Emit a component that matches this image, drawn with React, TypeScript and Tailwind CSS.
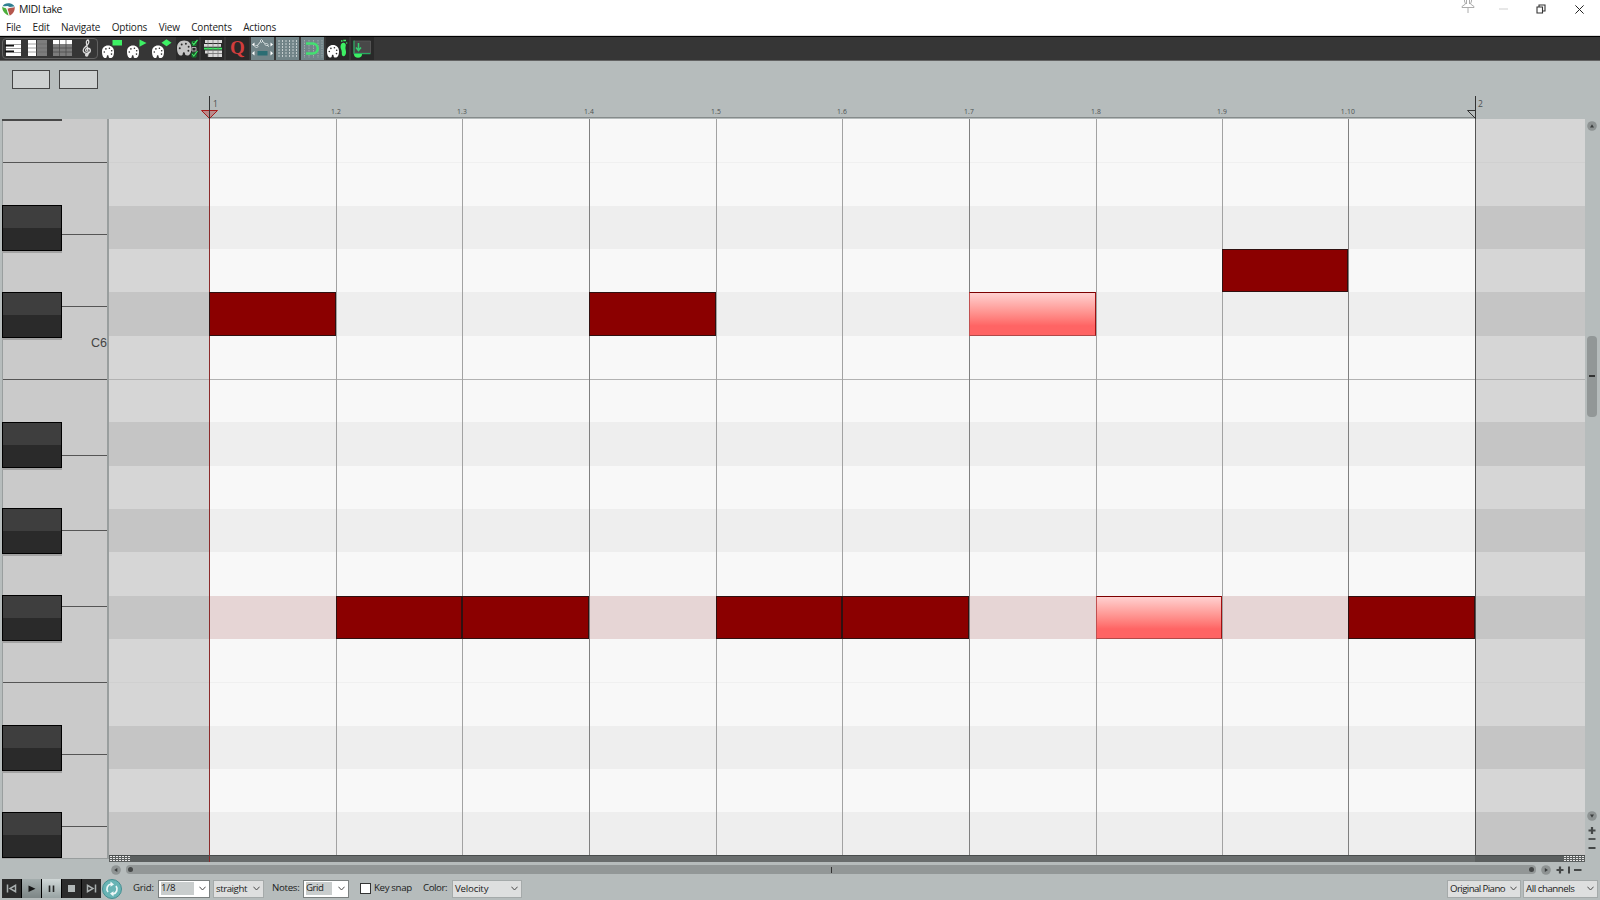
import type { ReactNode } from 'react';

const menus = ['File', 'Edit', 'Navigate', 'Options', 'View', 'Contents', 'Actions'];

// one entry per semitone lane, top to bottom
const lanes = [
  { black: false }, { black: false, faint: true }, { black: true }, { black: false }, { black: true },
  { black: false }, { black: false, octave: true }, { black: true }, { black: false },
  { black: true }, { black: false }, { black: true, tinted: true }, { black: false },
  { black: false, faint: true }, { black: true }, { black: false }, { black: true },
];

const LANE = 43.333;

// left edge of every beat, the last one closes the item
const beats = [100, 227, 353, 480, 607, 733, 860, 987, 1113, 1239, 1366];

const notes = [
  { step: 0, lane: 4 },
  { step: 1, lane: 11 },
  { step: 2, lane: 11 },
  { step: 3, lane: 4 },
  { step: 4, lane: 11 },
  { step: 5, lane: 11 },
  { step: 6, lane: 4, selected: true },
  { step: 7, lane: 11, selected: true },
  { step: 8, lane: 3 },
  { step: 9, lane: 11 },
];

const whiteKeys = [44, 72, 72, 73, 75.5, 75.5, 76, 76, 72, 72, 31.5];
const blackKeys = [86, 173, 303, 389, 476, 606, 693];

function Palette({ x = 0, y = 0, color = '#fff', s = 1 }: { x?: number; y?: number; color?: string; s?: number }) {
  return (
    <g transform={`translate(${x} ${y}) scale(${s})`}>
      <path d="M6 0C2.400 0 0 2.300 0 6.200 0 9.800 1.200 12.500 3.200 12.500c1.300 0 1.600-.7 1.600-1.500 0-.8.300-1.300.9-1.300s.9.500.9 1.200c0 1 .6 1.600 2 1.600C11 12.500 12 9.600 12 6.200 12 2.300 9.500 0 6 0z" fill={color} />
      <g fill="#2b2b2b">
        <circle cx="2.300" cy="6.500" r=".8" />
        <circle cx="3.900" cy="3.400" r=".8" />
        <circle cx="7.400" cy="2.700" r=".8" />
        <circle cx="9.700" cy="5.200" r=".8" />
        <circle cx="9.500" cy="8.600" r=".8" />
      </g>
    </g>
  );
}

const GREEN = '#3df064';

const tools: { bg?: string; icon: ReactNode }[] = [
  {
    icon: (
      <g>
        <path d="M5 3h15v16H5z" fill="#fff" />
        <path d="M4 8.500h9M4 14.500h9" stroke="#111" strokeWidth="2.200" />
        <path d="M12 7.500h8M5 11.500h15M12 15.500h8" stroke="#777" strokeWidth=".7" />
      </g>
    ),
  },
  {
    icon: (
      <g>
        <path d="M2 3h8v16H2z" fill="#fff" />
        <path d="M11 3h10v16H11z" fill="#7d7d7d" />
        <path d="M2 7h19M2 11h19M2 15h19" stroke="#666" strokeWidth=".6" />
      </g>
    ),
  },
  {
    icon: (
      <g>
        <path d="M2 7h19v12H2z" fill="#7d7d7d" />
        <path d="M2 3h19v4H2z" fill="#fff" />
        <path d="M2 11h19M2 15h19M8.500 3v16M15 3v16" stroke="#4c4c4c" strokeWidth=".8" />
      </g>
    ),
  },
  {
    icon: (
      <g fill="none" stroke="#ddd" strokeWidth="1.300">
        <path d="M12.500 17.500 10.400 6c-.3-2 .7-3 1.700-3 1.300 1.600.7 3.400-.8 5.100C9 10.200 7.200 11.400 7.200 13.300c0 2 1.800 3 3.800 3s3.300-1 3.300-2.700c0-3.300-4.700-2.900-4.700-.4 0 .8.500 1.300 1.200 1.500" />
        <circle cx="10.700" cy="18" r="1.100" fill="#ddd" />
      </g>
    ),
  },
  { icon: <g><Palette x={1} y={8.500} /><path d="M11.500 3h9.500v5.500h-9.500z" fill={GREEN} /></g> },
  { icon: <g><Palette x={1} y={8.500} /><path d="m13.500 2.500 7 3.500-7 3.700z" fill={GREEN} /></g> },
  { icon: <g><Palette x={1} y={8.500} /><path d="m15.500 2.200 5 3.500-5 3.500-5-3.500z" fill={GREEN} /></g> },
  {
    bg: 'bg-[#292929]',
    icon: (
      <g>
        <Palette x={1} y={3.500} color="#c4c4c4" s={1.2} />
        <path d="M16 4.500h4v4h-4zM16 16h4v4h-4z" fill="none" stroke="#138a30" strokeWidth=".9" />
        <path d="M16 10.500h4v3.500h-4z" fill="none" stroke="#bbb" strokeWidth=".9" />
        <path d="m16.300 5.500 1.500 2L21.500 3M16.300 17l1.500 2 3.700-5" fill="none" stroke={GREEN} strokeWidth="1.200" />
      </g>
    ),
  },
  {
    bg: 'bg-[#292929]',
    icon: (
      <g>
        <path d="M4 4.500h17M3 8.300h17M4 15h17M7 18.500h14" stroke="#d8d8d8" strokeWidth="2.800" />
        <path d="M3 11.600h18" stroke={GREEN} strokeWidth="1.800" />
        <path d="M7 3v17M12 3v17M17 3v17" stroke="#777" strokeWidth=".7" />
      </g>
    ),
  },
  {
    bg: 'bg-[#292929]',
    icon: <text x="11.500" y="17" textAnchor="middle" fill="#d23d3d" fontSize="19" fontWeight="700" fontFamily="Liberation Serif, serif">Q</text>,
  },
  {
    bg: 'bg-[#718488]',
    icon: (
      <g>
        <path d="m5.500 9.500 5-6 4.500 4 3 2" fill="none" stroke="#e8eeee" strokeWidth=".9" />
        <path d="m5.500 8 1.500 1.500L5.500 11 4 9.500zM10.500 2.500 12 4l-1.500 1.500L9 4zM15.500 6 17 7.500 15.500 9 14 7.500z" fill="#718488" stroke="#e8eeee" strokeWidth=".8" />
        <path d="M6.500 14h10v4.500h-10z" fill="#2b6d73" />
        <path d="M3.500 5.500v4L1 7.500zM19.500 5.500v4l2.500-2zM3.500 14v4.500L1 16.200zM19.500 14v4.500l2.500-2.300z" fill="#fff" />
      </g>
    ),
  },
  {
    bg: 'bg-[#718488]',
    icon: <path d="M3 3v18M6.500 3v18M10 3v18M13.500 3v18M17 3v18M20.500 3v18" stroke="#c3cccd" strokeWidth="1" strokeDasharray="2 1" />,
  },
  {
    bg: 'bg-[#718488]',
    icon: (
      <g fill="none">
        <path d="M3.500 3v18M8 3v18M12.500 3v18M17 3v18M21 3v18" stroke="#aab4b5" strokeWidth=".8" strokeDasharray="1.500 1" />
        <path d="M5 6.500h6.500c7 0 7 10 0 10H5" stroke="#43e071" strokeWidth="2.600" />
      </g>
    ),
  },
  {
    bg: 'bg-[#292929]',
    icon: (
      <g>
        <Palette x={1} y={8} />
        <path d="M14.500 9.500c.3-2.800 1.500-4 3.300-3.700 2 .4 2.400 2 1.700 4.200-.5 1.700.8 3.500.5 6-.3 2-1.300 3.500-2.600 3.300-1.600-.3-1.700-2-1.600-4 .1-2.300-1.500-3.600-1.300-5.800z" fill={GREEN} />
        <path d="M15 4h1.500M17.300 3.500H20M20.200 6h1" stroke={GREEN} strokeWidth="1.300" />
      </g>
    ),
  },
  {
    bg: 'bg-[#292929]',
    icon: (
      <g>
        <path d="M3 4h16.500v12H3z" fill="#484848" stroke="#606060" strokeWidth=".7" />
        <path d="M3 3.500v13.200h16.500" fill="none" stroke="#28ad61" strokeWidth="1.200" />
        <path d="M3 17a4 3.800 0 0 0 8 0z" fill={GREEN} />
        <path d="M7.500 6v6M5 10.500l2.500 3 2.500-3" fill="none" stroke="#35cf70" strokeWidth="1.500" />
      </g>
    ),
  },
];

const transport = [
  { bg: 'bg-[#2c2c2c]', icon: <path d="M5.500 5.500v8M13.500 6.300v6.400L8 9.500z" stroke="#a9afaf" strokeWidth="1.500" fill="none" /> },
  { bg: 'bg-linear-to-b from-[#a4adad] to-[#7d8686]', icon: <path d="M6.500 6.500v6.500l7-3.200z" fill="#161616" /> },
  { bg: 'bg-linear-to-b from-[#d0d7d7] to-[#98a3a3]', icon: <path d="M7.500 6.500v6.500M11.500 6.500v6.500" stroke="#222" strokeWidth="1.600" /> },
  { bg: 'bg-[#2c2c2c]', icon: <path d="M6 6h7v7H6z" fill="#b3b9b9" /> },
  { bg: 'bg-[#2c2c2c]', icon: <path d="M13.500 5.500v8M5.500 6.300v6.400L11 9.500z" stroke="#a9afaf" strokeWidth="1.500" fill="none" /> },
];

function Select({ label, className, edit }: { label: string; className: string; edit?: string }) {
  return (
    <div className={`flex h-[18px] shrink-0 items-center justify-between border pr-[3px] pl-[2px] ${edit ? 'border-[#7b8080] bg-white' : 'border-[#a5aaaa] bg-[#dedfdf]'} ${className}`}>
      <span className={edit ? `-mt-[1px] h-[13px] bg-[#c9cdcd] leading-[12px] ${edit}` : 'leading-[14px] whitespace-nowrap'}>{label}</span>
      <svg className="h-[5px] w-[7px] shrink-0" viewBox="0 0 7 5">
        <path d="M.4.7 3.500 4 6.600.7" fill="none" stroke="#4a4a4a" strokeWidth="1" />
      </svg>
    </div>
  );
}

function RoundButton({ d }: { d: string }) {
  return (
    <svg className="size-[10px] shrink-0" viewBox="0 0 10 10">
      <circle cx="5" cy="5" r="4.800" fill="#8e9393" />
      <path d={d} fill="#3a3d3d" />
    </svg>
  );
}

function GripDots() {
  return (
    <svg className="h-[5px] w-[20px]" viewBox="0 0 20 5">
      <path d="M0 .5h20M0 2.500h20M0 4.500h20" stroke="#e8e8e8" strokeWidth="1" strokeDasharray="2 1" />
    </svg>
  );
}

function TitleBar() {
  return (
    <div className="flex h-[36px] flex-col border-b border-[#dcdcdc] bg-white">
      <div className="flex h-[18px] items-center pl-[2px]">
        <svg className="size-[13px]" viewBox="0 0 13 13">
          <path d="M.5 3.500C1.500 1 4 .2 6.500.3 9 .4 12 1.500 12.500 4L9 4.500 5.500 3z" fill="#2f7f91" />
          <path d="M.3 3.800 4.300 5.500 6.800 12.800C3 11 0 8 .3 3.800z" fill="#4cae3b" />
          <path d="M5.300 5.500 12.700 4c.3 4-1.700 7.200-5.200 8.800z" fill="#b5564c" />
          <path d="m.8 3.600 4.500 1.400 6.700-1.200M4.800 5l2.500 8" stroke="#f3f6f6" strokeWidth=".8" fill="none" />
        </svg>
        <span className="ml-[4px] text-[10.500px] leading-[16px] tracking-[-0.400px] text-[#111]">MIDI take</span>
        <svg className="ml-auto h-[14px] w-[14px] self-start" viewBox="0 0 14 14">
          <path d="M3.500 0v1l1 3L1 6.500v1h12v-1L9.500 4l1-3V0M7 8v5M5.500 0v4M8.500 0v4" fill="none" stroke="#a3a3a3" strokeWidth=".9" />
        </svg>
        <svg className="ml-[24px] size-[9px]" viewBox="0 0 9 9"><path d="M0 4h9" stroke="#cfcfcf" /></svg>
        <svg className="ml-[28px] size-[10px]" viewBox="0 0 10 10">
          <path d="M1 3h5.500v6H1zM3 3V1h6v6H6.500" fill="none" stroke="#333" strokeWidth="1.100" />
        </svg>
        <svg className="mr-[16px] ml-[29px] size-[9px]" viewBox="0 0 9 9"><path d="m.4.4 8.200 8.200M8.600.4.4 8.600" stroke="#222" strokeWidth="1" /></svg>
      </div>
      <div className="flex gap-[11.500px] pt-[1px] pl-[6px] text-[10px] leading-[16px] tracking-[-0.200px] text-[#222]">
        {menus.map((m) => (
          <span key={m}>{m}</span>
        ))}
      </div>
    </div>
  );
}

function Toolbar() {
  return (
    <div className="relative flex h-[25px] border-t border-b border-t-black border-b-[#626262] bg-[#363636] pl-[1px]">
      <div className="absolute top-[1px] left-[2px] h-[21px] w-[96px] rounded-[4px] border border-[#626262]" />
      {tools.map((t, i) => (
        <div key={i} className={`relative mr-[2px] h-[23px] w-[23px] ${t.bg ?? ''}`}>
          <svg className="size-[23px]" viewBox="0 0 23 23">{t.icon}</svg>
        </div>
      ))}
    </div>
  );
}

function Ruler() {
  return (
    <div className="flex h-[58px] flex-col">
      <div className="flex h-[35px] gap-[9px] pt-[9px] pl-[12px]">
        <div className="h-[19px] w-[38px] border border-[#444] bg-[#cdd0d0]" />
        <div className="h-[19px] w-[39px] border border-[#444] bg-[#cdd0d0]" />
      </div>
      <div className="relative ml-[209px] flex h-[22px] w-[1267px] border-b border-[#858b8b] text-[#4c5050]">
        {notes.map((n) => (
          <div key={n.step} className="relative shrink-0" style={{ width: beats[n.step + 1] - beats[n.step] }}>
            {n.step > 0 && (
              <span className="absolute top-[11px] -left-[20px] w-[40px] text-center text-[6.800px] leading-[10px] tracking-[0.200px]">1.{n.step + 1}</span>
            )}
          </div>
        ))}
        <span className="absolute top-[2px] left-[4px] text-[8.500px] leading-[12px]">1</span>
        <span className="absolute top-[2px] left-[1269px] text-[8.500px] leading-[12px]">2</span>
        <svg className="absolute top-0 -left-[9px] h-[23px] w-[19px]" viewBox="0 0 19 23">
          <path d="M1.500 14.500h16l-8 8z" fill="#b98a8a" stroke="#a51c1c" />
          <path d="M9.500 0v23" stroke="#333" />
        </svg>
        <svg className="absolute top-0 left-[1256px] h-[23px] w-[12px]" viewBox="0 0 12 23">
          <path d="M10.500 0v23M10 14.500H2.500l8 8" stroke="#333" fill="none" />
        </svg>
      </div>
    </div>
  );
}

function Piano() {
  return (
    <div className="relative h-[740px] w-[109px] shrink-0 overflow-hidden">
      <div className="ml-[2px] h-[740px] w-[107px] border-r-2 border-b border-l border-[#999e9e] bg-[#cacaca]">
        {whiteKeys.map((h, i) => (
          <div key={i} className={`box-border flex items-end justify-end border-[#555] ${i < 10 ? 'border-b' : ''}`} style={{ height: h }}>
            {i === 3 && <span className="mb-[26px] font-['Liberation_Sans'] text-[12.500px] leading-[20px] text-[#444]">C6</span>}
          </div>
        ))}
      </div>
      <div className="absolute top-0 left-[2px] h-[2px] w-[60px] bg-[#484848]" />
      {blackKeys.map((y) => (
        <div
          key={y}
          className="absolute left-[2px] h-[46px] w-[60px] border border-black bg-linear-to-b from-[#3e3e3e] from-50% to-[#2a2a2a] to-50% shadow-[0_2px_0_#a2a2a2]"
          style={{ top: y }}
        />
      ))}
    </div>
  );
}

function NoteGrid() {
  return (
    <div className="relative h-[736px] w-[1476px] shrink-0 overflow-hidden">
      {lanes.map((l, i) => (
        <div key={i} className={`flex ${l.black ? 'bg-[#c5c5c5]' : 'bg-[#d6d6d6]'}`} style={{ height: LANE }}>
          <div className={`w-[100px] ${l.octave ? 'border-t border-[#b2b2b2]' : l.faint ? 'border-t border-[#d0d0d0]' : ''}`} />
          <div className={`w-[1266px] ${l.tinted ? 'bg-[#e6d5d5]' : l.black ? 'bg-[#eeeeee]' : 'bg-[#f8f8f8]'} ${l.octave ? 'border-t border-[#b2b2b2]' : l.faint ? 'border-t border-[#f0f0f0]' : ''}`} />
          <div className={`flex-1 ${l.octave ? 'border-t border-[#b2b2b2]' : l.faint ? 'border-t border-[#d0d0d0]' : ''}`} />
        </div>
      ))}
      {/* vertical beat lines */}
      <div className="absolute top-0 left-[100px] flex h-[736px]">
        {notes.map((n) => (
          <div
            key={n.step}
            className={`shrink-0 border-l ${n.step === 0 ? 'border-[#8b2a2a]' : n.step % 3 === 0 ? 'border-[#808080]' : 'border-[#a2a2a2]'}`}
            style={{ width: beats[n.step + 1] - beats[n.step] }}
          />
        ))}
        <div className="w-px bg-[#555]" />
      </div>
      {notes.map((n) => (
        <div
          key={n.step}
          className={`absolute border ${
            n.selected
              ? 'border-t-[#7c0000] border-r-[#a01010] border-b-[#b04a4a] border-l-[#c05050] bg-linear-to-b from-[#ffd0d0] to-[#ff6464] to-78%'
              : 'border-[#301010] bg-[#8b0000]'
          }`}
          style={{
            left: beats[n.step],
            top: Math.round(n.lane * LANE),
            width: beats[n.step + 1] - beats[n.step],
            height: Math.round((n.lane + 1) * LANE) - Math.round(n.lane * LANE),
          }}
        />
      ))}
    </div>
  );
}

function Editor() {
  return (
    <div className="flex h-[743px]">
      <Piano />
      <div className="flex w-[1476px] flex-col">
        <NoteGrid />
        <div className="flex h-[7px] border-t border-[#484c4c] bg-[#5b5f5f]">
          <div className="w-[100px] pl-[1px]"><GripDots /></div>
          <div className="w-[1266px] border-l border-[#8b2a2a] bg-[#696d6d]" />
          <div className="flex w-[110px] justify-end pr-[1px]"><GripDots /></div>
        </div>
      </div>
      <div className="flex w-[14px] flex-col items-center">
        <div className="mt-[2px]"><RoundButton d="M5 3.200 7 6.500H3z" /></div>
        <div className="mt-[205px] flex h-[81px] w-[10px] items-center justify-center rounded-[4px] bg-[#929797]">
          <div className="-mt-[2px] h-[2px] w-[6px] bg-[#333]" />
        </div>
        <div className="mt-[394px]"><RoundButton d="M5 6.800 3 3.500h4z" /></div>
        <svg className="mt-[4px] h-[29px] w-[10px]" viewBox="0 0 10 29">
          <path d="M1.500 5.500h7M5 2v7M1.500 23h7" stroke="#444747" strokeWidth="2.200" />
          <path d="M1.500 14h7" stroke="#111" strokeWidth="1.200" />
        </svg>
      </div>
    </div>
  );
}

function HorizontalScroll() {
  return (
    <div className="flex h-[15px] items-center pl-[111px]">
      <RoundButton d="M3.200 5 6.300 3v4z" />
      <div className="ml-[5px] flex h-[9px] w-[1410px] items-center justify-between rounded-[4px] bg-[#929797] px-[2px]">
        <div className="size-[5px] rounded-full bg-[#454848]" />
        <div className="h-[6px] w-px bg-[#333]" />
        <div className="size-[5px] rounded-full bg-[#454848]" />
      </div>
      <div className="ml-[5px]"><RoundButton d="M7 5 3.800 3v4z" /></div>
      <svg className="ml-[4px] h-[10px] w-[28px]" viewBox="0 0 28 10">
        <path d="M1.500 5h7M5 1.500v7M19 5h7.500" stroke="#444747" strokeWidth="2.200" />
        <path d="M14 1.500v7" stroke="#111" strokeWidth="1.400" />
      </svg>
    </div>
  );
}

function BottomBar() {
  return (
    <div className="flex h-[23px] items-center pl-[2px] text-[9.700px] tracking-[-0.450px] text-[#1c1c1c]">
      <div className="flex gap-px bg-black">
        {transport.map((t, i) => (
          <div key={i} className={`h-[19px] w-[19px] ${t.bg}`}>
            <svg className="size-[19px]" viewBox="0 0 19 19">{t.icon}</svg>
          </div>
        ))}
      </div>
      <svg className="ml-px size-[20px] shrink-0" viewBox="0 0 20 20">
        <circle cx="10" cy="10" r="9.500" fill="#68b4b5" stroke="#458f91" />
        <path d="M6 13A5 5 0 0 1 9 5M14 7a5 5 0 0 1-3 8" fill="none" stroke="#eef8f8" strokeWidth="1.700" />
        <path d="m8.500 2.600 3.500 2.800-3.500 2.300zM11.500 17.400 8 14.600l3.500-2.300z" fill="#eef8f8" />
      </svg>
      <span className="ml-[11px] w-[25px] tracking-[-0.200px]">Grid:</span>
      <Select label="1/8" className="w-[52px] tracking-[0px]" edit="w-[33px]" />
      <Select label="straight" className="ml-[3px] w-[51px]" />
      <span className="ml-[8px] w-[31px] tracking-[-0.300px]">Notes:</span>
      <Select label="Grid" className="w-[46px]" edit="w-[26px]" />
      <div className="ml-[11px] size-[11px] shrink-0 border border-[#333] bg-white" />
      <span className="ml-[3px] w-[49px] whitespace-nowrap tracking-[-0.350px]">Key snap</span>
      <span className="w-[29px]">Color:</span>
      <Select label="Velocity" className="w-[70px] tracking-[-0.200px]" />
      <div className="mr-[2px] ml-auto flex gap-[2px]">
        <Select label="Original Piano" className="w-[74px] tracking-[-0.600px]" />
        <Select label="All channels" className="w-[75px]" />
      </div>
    </div>
  );
}

export default function App() {
  return (
    <div className="flex h-[900px] w-[1600px] flex-col overflow-hidden bg-[#b6bcbc] font-['Open_Sans',sans-serif]">
      <TitleBar />
      <Toolbar />
      <Ruler />
      <Editor />
      <HorizontalScroll />
      <BottomBar />
    </div>
  );
}
